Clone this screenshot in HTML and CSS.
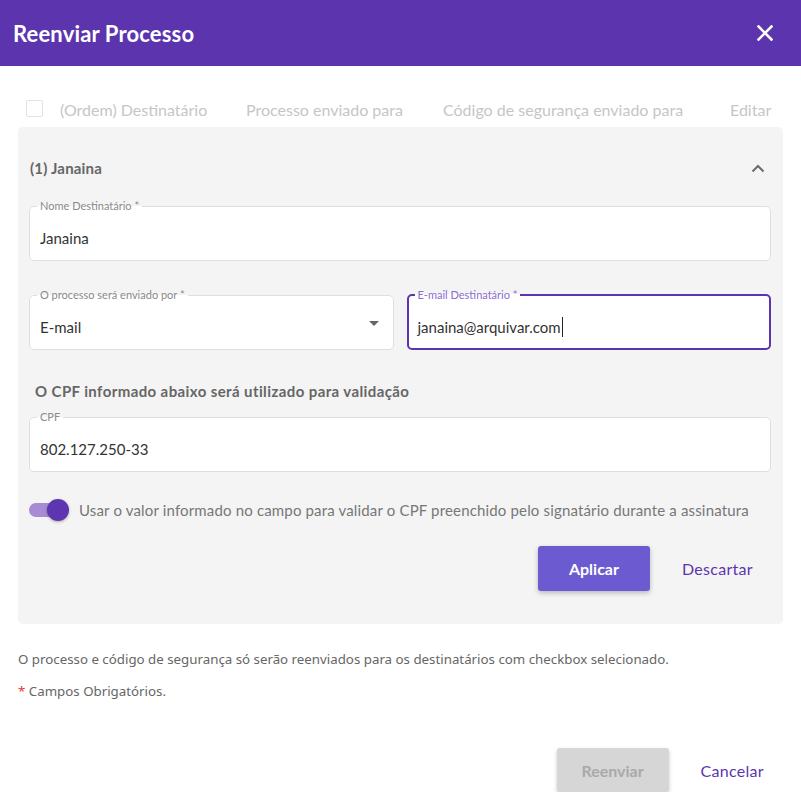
FILE: index.html
```html
<!DOCTYPE html>
<html lang="pt-BR">
<head>
<meta charset="utf-8">
<title>Reenviar Processo</title>
<link rel="stylesheet" href="styles.css">
</head>
<body>
<div class="dialog">
  <header class="topbar">
    <h1 class="title">Reenviar Processo</h1>
    <button class="close" aria-label="Fechar">
      <svg width="16" height="16" viewBox="0 0 16 16"><path d="M1.5 1.5 L14.5 14.5 M14.5 1.5 L1.5 14.5" stroke="#fff" stroke-width="2.6" stroke-linecap="square"/></svg>
    </button>
  </header>

  <main class="content">
    <div class="thead">
      <span class="cb"></span>
      <span>(Ordem) Destinatário</span>
      <span>Processo enviado para</span>
      <span>Código de segurança enviado para</span>
      <span>Editar</span>
    </div>

    <section class="panel">
      <div class="panel-title">
        <span>(1) Janaina</span>
        <svg class="chev" width="14" height="9" viewBox="0 0 14 9"><path d="M1.5 7.5 L7 2 L12.5 7.5" fill="none" stroke="#6b6b6b" stroke-width="2"/></svg>
      </div>

      <fieldset class="field">
        <legend>Nome Destinatário *</legend>
        <div class="value">Janaina</div>
      </fieldset>

      <div class="row2">
        <fieldset class="field">
          <legend>O processo será enviado por *</legend>
          <div class="value select">E-mail<span class="arrow"></span></div>
        </fieldset>
        <fieldset class="field focused">
          <legend>E-mail Destinatário *</legend>
          <div class="value">janaina@arquivar.com<span class="caret"></span></div>
        </fieldset>
      </div>

      <h2 class="cpf-title">O CPF informado abaixo será utilizado para validação</h2>

      <fieldset class="field">
        <legend>CPF</legend>
        <div class="value">802.127.250-33</div>
      </fieldset>

      <div class="toggle-row">
        <span class="toggle"><span class="track"></span><span class="knob"></span></span>
        <span class="toggle-text">Usar o valor informado no campo para validar o CPF preenchido pelo signatário durante a assinatura</span>
      </div>

      <div class="panel-actions">
        <button class="btn primary">Aplicar</button>
        <button class="btn link">Descartar</button>
      </div>
    </section>

    <p class="note">O processo e código de segurança só serão reenviados para os destinatários com checkbox selecionado.</p>
    <p class="note req"><span class="star">*</span> Campos Obrigatórios.</p>

    <div class="footer-actions">
      <button class="btn disabled">Reenviar</button>
      <button class="btn link cancel">Cancelar</button>
    </div>
  </main>
</div>
</body>
</html>
```

FILE: styles.css
```css
* { box-sizing: border-box; }
html, body { margin: 0; padding: 0; background: #fff; }
body { font-family: Lato, "Open Sans", sans-serif; color: #333; }

.topbar {
  height: 66px;
  background: #5c35ae;
  display: flex;
  align-items: center;
  justify-content: space-between;
  padding: 0 28px 0 13px;
}
.title {
  margin: 0;
  color: #fff;
  font-size: 22px;
  font-weight: 700;
  letter-spacing: 0.15px;
}
.close {
  background: none;
  border: 0;
  padding: 0;
  width: 16px;
  height: 16px;
  display: flex;
}

.content { padding: 0 18px; }

.thead {
  height: 61px;
  display: grid;
  grid-template-columns: 34px 186px 197px 287px 1fr;
  align-items: center;
  padding: 26px 0 0 8px;
  color: #c6c6c6;
  font-size: 16px;
}
.cb {
  width: 17px;
  height: 17px;
  border: 1px solid #e2e2e2;
  border-radius: 2px;
  background: #fff;
  margin-top: -2px;
}

.panel {
  background: #f4f4f4;
  border-radius: 5px;
  padding: 28px 12px 33px 11px;
}
.panel-title {
  height: 26px;
  display: flex;
  align-items: center;
  justify-content: space-between;
  padding: 0 6px 0 1px;
  font-size: 15px;
  font-weight: 700;
  color: #666;
  letter-spacing: 0.2px;
  margin-bottom: 19px;
}

.field {
  margin: 0;
  padding: 0 10px;
  height: 61px;
  border: 1px solid #dedede;
  border-radius: 5px;
  background: #fff;
  min-width: 0;
}
.field legend {
  font-size: 11px;
  color: #8a8a8a;
  padding: 0 3px;
  margin-left: -3px;
  line-height: 12px;
}
.field .value {
  font-size: 15px;
  color: #333;
  height: 44px;
  margin-top: 4px;
  display: flex;
  align-items: center;
}
.field.focused {
  border: 2px solid #5c35ae;
  padding: 0 9px;
}
.field.focused legend { color: #8c6cd0; }
.caret {
  display: inline-block;
  width: 1px;
  height: 20px;
  background: #222;
  margin-left: 1px;
}
.select { justify-content: space-between; }
.arrow {
  width: 0;
  height: 0;
  border-left: 5px solid transparent;
  border-right: 5px solid transparent;
  border-top: 5px solid #666;
  margin-right: 4px;
  margin-top: -7px;
}

.row2 {
  display: grid;
  grid-template-columns: 1fr 1fr;
  gap: 13px;
  margin-top: 28px;
}

.cpf-title {
  margin: 31px 0 10px 6px;
  font-size: 15px;
  line-height: 20px;
  font-weight: 700;
  color: #666;
  letter-spacing: 0.4px;
}

.toggle-row {
  display: flex;
  align-items: center;
  height: 24px;
  margin-top: 26px;
}
.toggle {
  position: relative;
  width: 40px;
  height: 24px;
  margin-right: 10px;
  flex: none;
}
.track {
  position: absolute;
  left: 0;
  top: 5px;
  width: 34px;
  height: 14px;
  border-radius: 7px;
  background: #a78bd4;
}
.knob {
  position: absolute;
  left: 18px;
  top: 1px;
  width: 22px;
  height: 22px;
  border-radius: 50%;
  background: #5e35b1;
  box-shadow: 0 1px 3px rgba(0,0,0,0.3);
}
.toggle-text {
  font-size: 15px;
  color: #777;
  white-space: nowrap;
  letter-spacing: 0.16px;
}

.panel-actions {
  display: flex;
  justify-content: flex-end;
  gap: 18px;
  margin-top: 24px;
  padding-right: 4px;
}
.btn {
  font-family: inherit;
  font-size: 16px;
  border: 0;
  border-radius: 3px;
  height: 45px;
  background: none;
  padding: 0 14px;
}
.btn.primary {
  width: 112px;
  background: #6b5ad0;
  color: #fff;
  font-weight: 700;
  box-shadow: 0 2px 5px rgba(0,0,0,0.25);
}
.btn.link { color: #5c35ae; letter-spacing: 0.3px; }

.note {
  margin: 25px 0 0 0;
  font-family: "Noto Sans", sans-serif;
  font-size: 13.3px;
  color: #666;
  line-height: 20px;
}
.note.req { margin-top: 12px; }
.star { color: #e53935; }

.footer-actions {
  display: flex;
  justify-content: flex-end;
  gap: 14px;
  margin-top: 47px;
}
.btn.disabled {
  width: 112px;
  height: 44px;
  background: #d6d6d6;
  color: #a9a9a9;
  font-weight: 700;
  box-shadow: 0 2px 4px rgba(0,0,0,0.2);
}
.btn.cancel { padding: 0 19px 0 18px; height: 44px; }
```
